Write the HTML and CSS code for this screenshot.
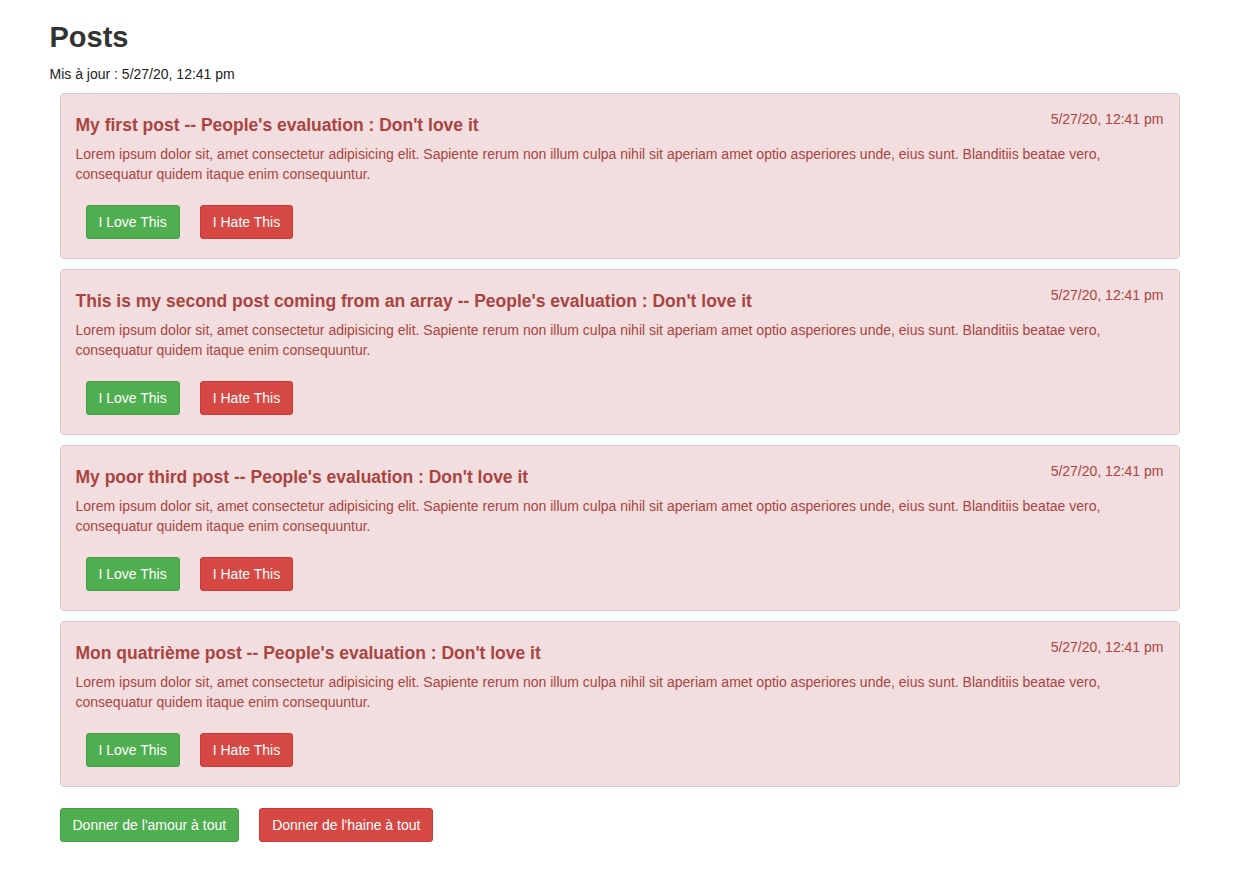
FILE: index.html
```html
<!DOCTYPE html>
<html lang="fr">
<head>
<meta charset="utf-8">
<title>Posts</title>
<link rel="stylesheet" href="styles.css">
</head>
<body>
<div class="container">
  <h1 class="page-title">Posts</h1>
  <div class="updated">Mis à jour : 5/27/20, 12:41 pm</div>

  <div class="post">
    <div class="post-date">5/27/20, 12:41 pm</div>
    <h3 class="post-title">My first post -- People's evaluation : Don't love it</h3>
    <p class="post-body">Lorem ipsum dolor sit, amet consectetur adipisicing elit. Sapiente rerum non illum culpa nihil sit aperiam amet optio asperiores unde, eius sunt. Blanditiis beatae vero, consequatur quidem itaque enim consequuntur.</p>
    <div class="post-actions">
      <button class="btn btn-success">I Love This</button>
      <button class="btn btn-danger">I Hate This</button>
    </div>
  </div>

  <div class="post">
    <div class="post-date">5/27/20, 12:41 pm</div>
    <h3 class="post-title">This is my second post coming from an array -- People's evaluation : Don't love it</h3>
    <p class="post-body">Lorem ipsum dolor sit, amet consectetur adipisicing elit. Sapiente rerum non illum culpa nihil sit aperiam amet optio asperiores unde, eius sunt. Blanditiis beatae vero, consequatur quidem itaque enim consequuntur.</p>
    <div class="post-actions">
      <button class="btn btn-success">I Love This</button>
      <button class="btn btn-danger">I Hate This</button>
    </div>
  </div>

  <div class="post">
    <div class="post-date">5/27/20, 12:41 pm</div>
    <h3 class="post-title">My poor third post -- People's evaluation : Don't love it</h3>
    <p class="post-body">Lorem ipsum dolor sit, amet consectetur adipisicing elit. Sapiente rerum non illum culpa nihil sit aperiam amet optio asperiores unde, eius sunt. Blanditiis beatae vero, consequatur quidem itaque enim consequuntur.</p>
    <div class="post-actions">
      <button class="btn btn-success">I Love This</button>
      <button class="btn btn-danger">I Hate This</button>
    </div>
  </div>

  <div class="post">
    <div class="post-date">5/27/20, 12:41 pm</div>
    <h3 class="post-title">Mon quatrième post -- People's evaluation : Don't love it</h3>
    <p class="post-body">Lorem ipsum dolor sit, amet consectetur adipisicing elit. Sapiente rerum non illum culpa nihil sit aperiam amet optio asperiores unde, eius sunt. Blanditiis beatae vero, consequatur quidem itaque enim consequuntur.</p>
    <div class="post-actions">
      <button class="btn btn-success">I Love This</button>
      <button class="btn btn-danger">I Hate This</button>
    </div>
  </div>

  <div class="global-actions">
    <button class="btn btn-success">Donner de l'amour à tout</button>
    <button class="btn btn-danger">Donner de l'haine à tout</button>
  </div>
</div>
</body>
</html>
```

FILE: styles.css
```css
* { box-sizing: border-box; }

body {
  margin: 0;
  font-family: "Liberation Sans", Arial, Helvetica, sans-serif;
  font-size: 14px;
  line-height: 20px;
  color: #333;
  background: #fff;
}

.container {
  width: 1170px;
  margin: 0 auto;
  padding: 0 15px;
}

.page-title {
  margin: 21px 0 10px;
  font-size: 29px;
  line-height: 33px;
  font-weight: 700;
  color: #333;
}

.updated {
  font-size: 14px;
  line-height: 20px;
  color: #222;
  margin-bottom: 9px;
}

.post {
  margin: 0 10px 10px;
  padding: 15px;
  background: #f2dede;
  border: 1px solid #dcc9c9;
  border-radius: 4px;
  color: #a94442;
  display: flow-root;
}

.post-date {
  float: right;
  font-size: 14px;
  line-height: 20px;
}

.post-title {
  margin: 6px 0 9px;
  font-size: 17.5px;
  line-height: 20px;
  font-weight: 700;
}

.post-body {
  margin: 0;
  font-size: 14px;
  line-height: 20px;
}

.post-actions {
  margin-top: 21px;
  margin-bottom: 4px;
  display: flex;
}

.btn {
  margin: 0 10px;
  padding: 6px 12px;
  font-family: "Liberation Sans", Arial, Helvetica, sans-serif;
  font-size: 14px;
  line-height: 20px;
  color: #fff;
  border: 1px solid transparent;
  border-radius: 3px;
  cursor: pointer;
}

.btn-success {
  background: #4fae4f;
  border-color: #45a045;
}

.btn-danger {
  background: #d64843;
  border-color: #cc3a35;
}

.global-actions {
  margin-top: 21px;
  display: flex;
}
```
